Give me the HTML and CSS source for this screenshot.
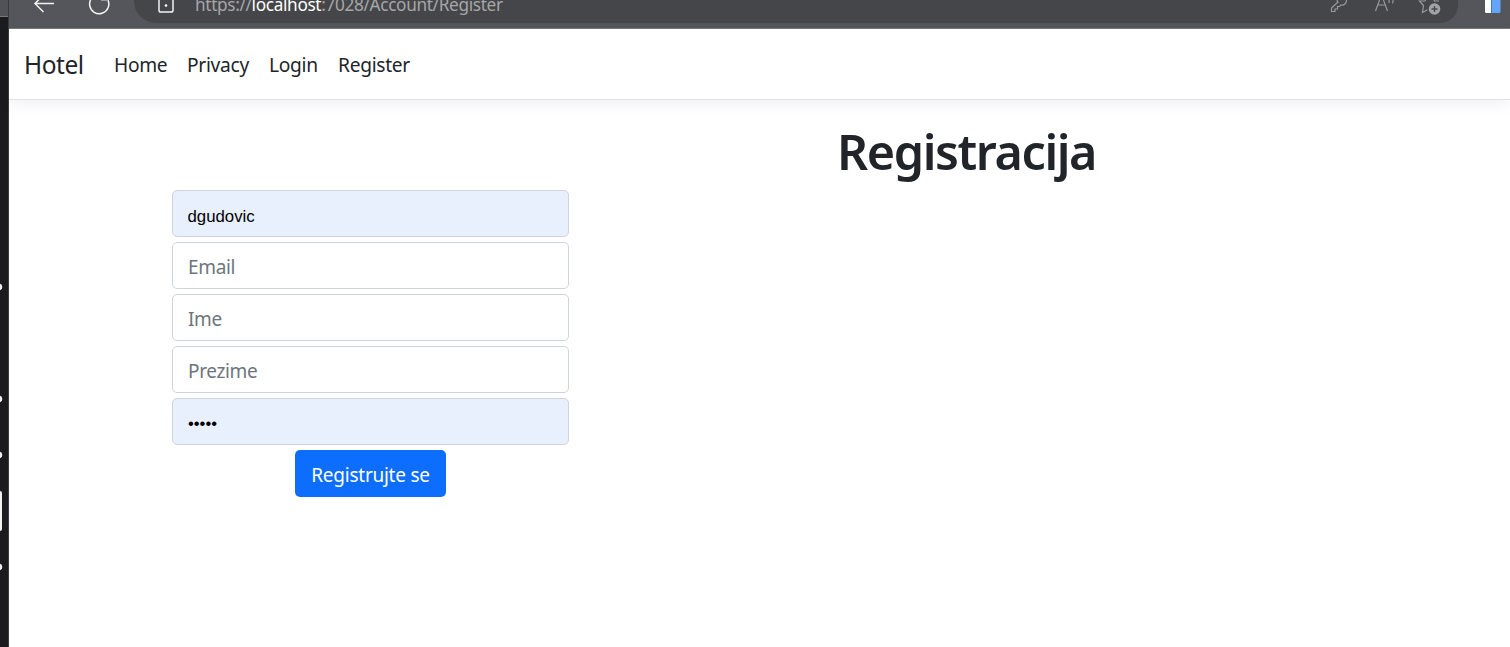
FILE: index.html
```html
<!DOCTYPE html>
<html lang="hr">
<head>
<meta charset="utf-8">
<title>Registracija</title>
<link rel="stylesheet" href="styles.css">
</head>
<body>
<div class="desktop">
  <aside class="strip">
    <div class="strip-top"></div>
    <svg class="strip-marks" width="9" height="630" viewBox="0 17 9 630">
      <g fill="#f1f1f2"><circle cx="-1.2" cy="287" r="3.5"/><circle cx="-1.2" cy="399" r="3.5"/><circle cx="-1.2" cy="455" r="3.5"/><rect x="-4" y="491" width="6" height="40" rx="2"/><circle cx="-1.2" cy="567" r="3.5"/></g>
    </svg>
  </aside>
  <div class="window">
    <div class="toolbar">
      <svg class="back" width="22" height="24" viewBox="0 0 22 24" fill="none" stroke="#f2f2f2" stroke-width="1.5"><path d="M21 3.5H2M10.5-5 2 3.5l8.500 8.500"/></svg>
      <svg class="reload" width="24" height="24" viewBox="0 0 24 24" fill="none" stroke="#f2f2f2" stroke-width="1.500"><path d="M20.900 0A9.600 9.600 0 1 1 12-5.500"/><path d="M14 .3h7" stroke="#999a9d"/></svg>
      <div class="address">
        <svg class="lock" width="16" height="23" viewBox="0 0 16 23"><rect x="1" y="-3" width="14" height="15" rx="1.800" fill="none" stroke="#f2f2f2" stroke-width="1.500"/><circle cx="8" cy="5.500" r="1.300" fill="#fff"/></svg>
        <span class="url">https://<b>localhost</b>:7028/Account/Register</span>
        <svg class="tools" width="115" height="23" viewBox="1328 0 115 23" fill="none" stroke="#98999c" stroke-width="1.200">
          <path d="M1337.500-2q-1 3 .5 4l-6.500 6v3.500h3.500v-2.500h2.500v-2.500h2l1.500-1.500c3 .8 5.500-1.500 5.700-6"/>
          <path d="M1375.500 11 1381-4h1L1387.500 11M1377.500 5h8M1388-2q1.500 2 1 5M1392-3q1.800 3 .5 6.500"/>
          <path d="M1439 1h-4.500l-2-4M1427-3l-2 4h-5.500l4 4.500-1 7 5-2.800"/>
          <circle cx="1434.500" cy="9" r="5.800" fill="#a2a3a5" stroke="none"/><path d="M1431.500 9h6M1434.500 6v6" stroke="#48494c" stroke-width="1.400"/>
        </svg>
      </div>
      <svg class="extension" width="16" height="14" viewBox="0 0 16 14"><path d="M0 0h7v13H1.500Q0 13 0 11.500Z" fill="#fff"/><path d="M7 0h8.500v11.500Q15.500 13 14 13H7Z" fill="#64a4fb"/><path d="M6.500 0v13" stroke="#3f79c9"/></svg>
    </div>
    <nav class="navbar">
      <a class="brand">Hotel</a>
      <a class="link home">Home</a>
      <a class="link privacy">Privacy</a>
      <a class="link login">Login</a>
      <a class="link register">Register</a>
    </nav>
    <main class="content">
      <h1 class="title">Registracija</h1>
      <form class="form">
        <input class="field filled" type="text" value="dgudovic">
        <input class="field" type="text" placeholder="Email">
        <input class="field" type="text" placeholder="Ime">
        <input class="field" type="text" placeholder="Prezime">
        <div class="field filled password">•••••</div>
        <button class="submit" type="button">Registrujte se</button>
      </form>
    </main>
  </div>
</div>
</body>
</html>
```
FILE: styles.css
```css
* { box-sizing: border-box; }
body {
  margin: 0;
  overflow: hidden;
  background: #fff;
  color: #212529;
  font-family: "Noto Sans", "Open Sans", sans-serif;
}
.desktop { display: flex; height: 647px; }
.strip { width: 9px; flex: none; background: #1b1b1f; border-right: 1px solid #3b3b3e; }
.strip-top { height: 17px; background: #515257; border-bottom: 1px solid #77787c; }
.strip-marks { display: block; }
.window { flex: 1; min-width: 0; }
.toolbar {
  display: flex;
  height: 29px;
  background: #55565b;
  border-bottom: 1px solid #77787c;
}
.back { margin-left: 24px; }
.reload { margin-left: 32px; }
.address {
  display: flex;
  width: 1324px;
  height: 23px;
  margin-left: 23px;
  padding-left: 24px;
  border-radius: 0 0 18px 22px;
  background: #454649;
}
.url {
  margin: -9px 0 0 21px;
  height: 27px;
  line-height: 27px;
  font-size: 17.2px;
  color: #a5a6a8;
  letter-spacing: -0.33px;
  white-space: nowrap;
}
.url b { font-weight: 400; color: #fff; }
.tools { margin-left: auto; margin-right: 15px; }
.extension { margin-left: 27px; }
.navbar {
  position: relative;
  display: flex;
  align-items: center;
  height: 71px;
  padding: 2px 0 0 15px;
  border-bottom: 1px solid #dee2e6;
  box-shadow: 0 5px 14px rgba(0, 0, 0, 0.055);
  background: #fff;
  line-height: 30px;
}
.brand { width: 90px; font-size: 24.5px; letter-spacing: -0.45px; }
.link { font-size: 19.2px; letter-spacing: -0.3px; white-space: nowrap; }
.home { width: 73px; }
.privacy { width: 82px; }
.login { width: 69px; }
.content { padding-top: 21px; }
.title {
  width: 262px;
  margin: 0 0 9px 828px;
  font-size: 48.5px;
  font-weight: 600;
  line-height: 60px;
  letter-spacing: -1.4px;
  white-space: nowrap;
}
.form {
  display: flex;
  flex-direction: column;
  align-items: center;
  gap: 5px;
  width: 397px;
  margin-left: 163px;
}
.field {
  width: 100%;
  height: 47px;
  padding: 3px 15px 0;
  border: 1px solid #ced4da;
  border-radius: 5px;
  background: #fff;
  font-family: "Noto Sans", sans-serif;
  font-size: 19px;
  letter-spacing: -0.35px;
}
.field::placeholder { color: #6c757d; opacity: 1; }
.filled {
  padding: 7px 14.5px 0;
  background: #e8f0fe;
  color: #000;
  font-family: "Liberation Sans", Arial, sans-serif;
  font-size: 16.8px;
  letter-spacing: 0;
}
.password { padding: 5px 15px 0; line-height: 39px; font-size: 16.6px; }
.submit {
  width: 151px;
  height: 47px;
  padding: 3px 0 0;
  border: 0;
  border-radius: 5px;
  background: #0d6efd;
  color: #fff;
  font-family: "Noto Sans", sans-serif;
  font-size: 19px;
  letter-spacing: -0.25px;
}
```
